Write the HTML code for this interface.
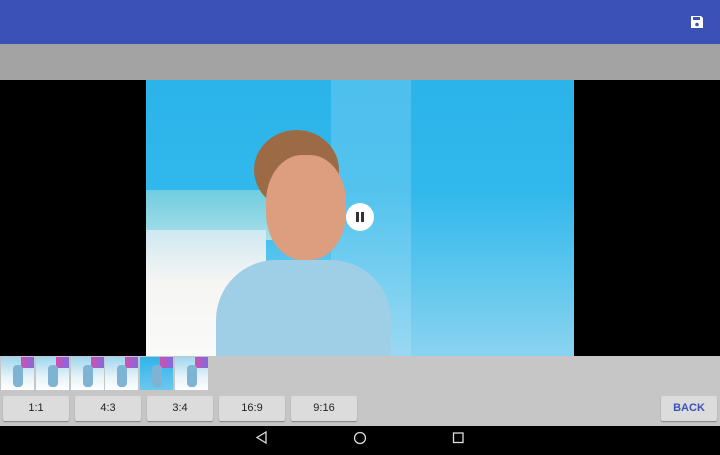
<!DOCTYPE html>
<html><head><meta charset="utf-8"><style>
*{margin:0;padding:0;box-sizing:border-box}
body{width:720px;height:450px;overflow:hidden;background:#000;font-family:"Liberation Sans",sans-serif;position:relative}
.top{position:absolute;left:0;top:0;width:720px;height:44px;background:#3b51b7}
.band{position:absolute;left:0;top:44px;width:720px;height:36px;background:#a3a3a3}
.stage{position:absolute;left:0;top:80px;width:720px;height:276px;background:#000}
.img{position:absolute;left:146px;top:80px;width:428px;height:276px;overflow:hidden;
background:linear-gradient(180deg,#2bb4ea 0%,#31b8ec 40%,#5cc6ee 70%,#8ad3f0 100%)}
.beach{position:absolute;left:0;top:150px;width:120px;height:126px;background:linear-gradient(180deg,#cfe8f2,#f5f5f3 40%,#fafaf8)}
.sea{position:absolute;left:0;top:110px;width:160px;height:50px;background:linear-gradient(180deg,#6fcde0,#a9dfe8)}
.body{position:absolute;left:70px;top:180px;width:175px;height:110px;border-radius:60px 60px 0 0;background:#9fcfe6}
.head{position:absolute;left:120px;top:75px;width:80px;height:105px;border-radius:45%;background:#dd9e80}
.hair{position:absolute;left:108px;top:50px;width:85px;height:80px;border-radius:50%;background:#9c6a45}
.ghost{position:absolute;left:185px;top:0;width:80px;height:276px;background:rgba(220,240,250,.2)}
.pause{position:absolute;left:346px;top:203px;width:28px;height:28px;border-radius:50%;background:#fff}
.pause:before,.pause:after{content:"";position:absolute;top:9px;width:3px;height:10px;background:#333}
.pause:before{left:10px}.pause:after{left:15px}
.bottom{position:absolute;left:0;top:356px;width:720px;height:70px;background:#c6c6c6}
.th{position:absolute;top:357px;width:33px;height:33px;background:linear-gradient(180deg,#9fd6ef,#e6f3f8 60%,#fff)}
.th i{position:absolute;right:0;top:0;width:13px;height:11px;background:linear-gradient(90deg,#d34fb0,#7b6de0)}
.th b{position:absolute;left:12px;top:8px;width:10px;height:22px;border-radius:4px;background:#7fb3d4}
.btn{position:absolute;top:396px;height:25px;width:66px;background:#dcdcdc;border-radius:2px;box-shadow:0 1px 1px rgba(0,0,0,.35);font-size:11px;color:#222;text-align:center;line-height:25px}
.nav{position:absolute;left:0;top:426px;width:720px;height:24px;background:#000}
</style></head><body>
<div class="top"><svg style="position:absolute;left:690px;top:15px" width="14" height="14" viewBox="0 0 14 14"><path d="M1 1h10l2 2v10H1z" fill="#fff"/><rect x="3" y="2" width="7" height="3" fill="#3b51b7"/><circle cx="7" cy="9.5" r="1.8" fill="#3b51b7"/></svg></div>
<div class="band"></div>
<div class="stage"></div>
<div class="img"><div class="sea"></div><div class="beach"></div><div class="ghost"></div><div class="body"></div><div class="hair"></div><div class="head"></div></div>
<div class="pause"></div>
<div class="bottom"></div>
<div class="th" style="left:1px"><i></i><b></b></div>
<div class="th" style="left:36px"><i></i><b></b></div>
<div class="th" style="left:71px"><i></i><b></b></div>
<div class="th" style="left:105px"><i></i><b></b></div>
<div class="th" style="left:140px;background:linear-gradient(180deg,#2fb5ea,#6cc8ee)"><i></i><b></b></div>
<div class="th" style="left:175px"><i></i><b></b></div>
<div class="btn" style="left:3px">1:1</div>
<div class="btn" style="left:75px">4:3</div>
<div class="btn" style="left:147px">3:4</div>
<div class="btn" style="left:219px">16:9</div>
<div class="btn" style="left:291px">9:16</div>
<div class="btn" style="left:661px;width:56px;color:#3b51b7;font-weight:bold">BACK</div>
<div class="nav"><svg width="720" height="24"><path d="M266 6l-9 5.5 9 5.5z" fill="none" stroke="#ddd" stroke-width="1.3"/><circle cx="360" cy="12" r="5.5" fill="none" stroke="#ddd" stroke-width="1.3"/><rect x="453.5" y="7" width="9.5" height="9.5" fill="none" stroke="#ddd" stroke-width="1.3"/></svg></div>
</body></html>
